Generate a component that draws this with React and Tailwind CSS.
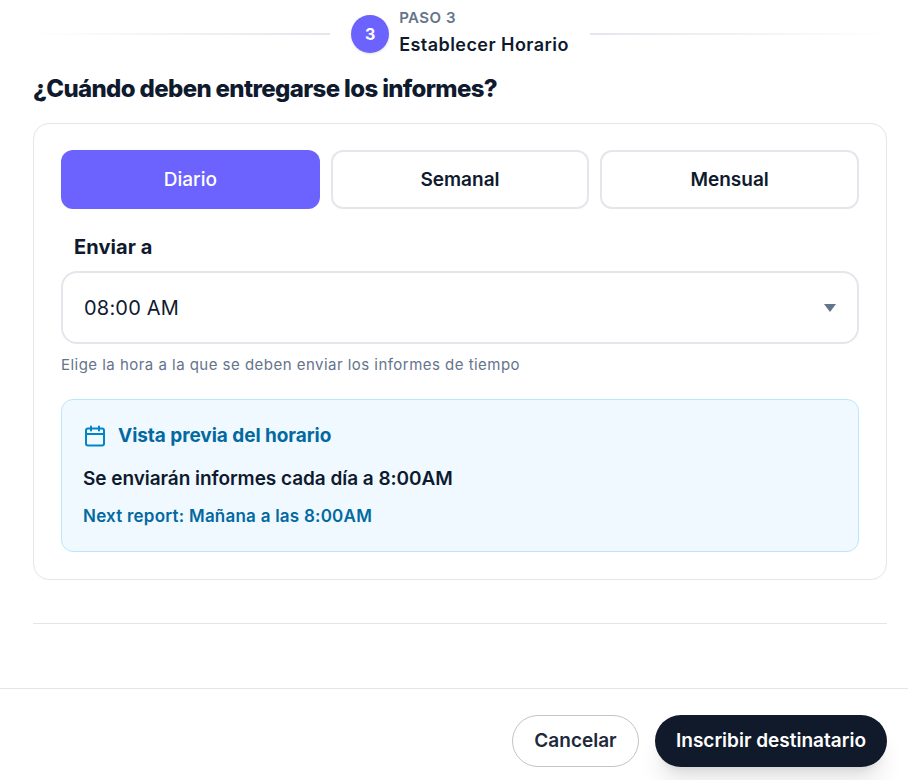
import React from 'react';

const tabs = ['Diario', 'Semanal', 'Mensual'];

function CalendarIcon() {
  return (
    <svg width="24" height="24" viewBox="0 0 24 24" fill="none" stroke="#0284c7" strokeWidth="2" strokeLinecap="round" strokeLinejoin="round">
      <rect x="3" y="4.5" width="18" height="17" rx="2" />
      <path d="M3 10h18M8 2.5v4M16 2.5v4" />
    </svg>
  );
}

export default function App() {
  return (
    <div className="w-[908px] h-[780px] bg-white flex flex-col overflow-hidden font-['Inter',sans-serif] text-[#0f1a2e]">
      {/* Stepper header */}
      <div className="h-[68px] flex items-center pl-[33px] pr-[21px] shrink-0">
        <div className="flex-1 h-0.5 bg-gradient-to-r from-transparent to-[#e5e5ec]" />
        <div className="flex items-center gap-[10px] px-[21px]">
          <div className="w-[38px] h-[38px] rounded-full bg-[#6c63ff] text-white flex items-center justify-center text-[16px] font-bold shadow-sm">3</div>
          <div className="flex flex-col pb-[2px]">
            <span className="text-[15px] leading-[18px] font-semibold tracking-[0.5px] text-[#64748b] mb-[6px]">PASO 3</span>
            <span className="text-[18px] leading-[24px] font-semibold tracking-[0.45px]">Establecer Horario</span>
          </div>
        </div>
        <div className="flex-1 h-0.5 bg-gradient-to-l from-transparent to-[#e5e5ec]" />
      </div>

      <div className="pl-[33px] pr-[21px] flex flex-col flex-1">
        <h2 className="text-[24px] leading-[28px] font-extrabold tracking-[-0.65px] mt-[7px] mb-[20px]">¿Cuándo deben entregarse los informes?</h2>

        {/* Schedule card */}
        <div className="border border-[#e5e5ea] rounded-[16px] px-[27px] pt-[26px] pb-[27px]">
          <div className="grid grid-cols-3 gap-[11px]">
            {tabs.map((t, i) => (
              <button
                key={t}
                className={i === 0
                  ? 'h-[59px] pt-[2px] rounded-[12px] bg-[#6c63ff] text-white text-[19px] font-medium'
                  : 'h-[59px] pt-[2px] rounded-[12px] border-2 border-[#e5e5ec] bg-white text-[19px] font-semibold'}
              >
                {t}
              </button>
            ))}
          </div>

          <label className="block text-[20px] leading-[24px] font-bold tracking-[0.1px] ml-[13px] mt-[26px] mb-[12px]">Enviar a</label>
          <div className="h-[73px] rounded-[16px] border-2 border-[#e5e5ec] flex items-center justify-between pl-[21px] pr-[21px]">
            <span className="text-[20px] tracking-[0.2px]">08:00 AM</span>
            <span className="w-0 h-0 border-l-[6px] border-r-[6px] border-t-[8px] border-l-transparent border-r-transparent border-t-[#64748b]" />
          </div>
          <p className="text-[15px] leading-[20px] tracking-[0.47px] text-[#64748b] mt-[11px] mb-[24px]">Elige la hora a la que se deben enviar los informes de tiempo</p>

          {/* Preview */}
          <div className="h-[153px] rounded-[12px] border border-[#bae6fd] bg-[#f0f9ff] px-[21px] pt-[24px]">
            <div className="flex items-center gap-[11px]">
              <CalendarIcon />
              <span className="text-[19px] leading-[24px] font-bold tracking-[-0.05px] text-[#0369a1]">Vista previa del horario</span>
            </div>
            <p className="text-[19px] leading-[24px] font-semibold tracking-[-0.05px] mt-[19px]">Se enviarán informes cada día a 8:00AM</p>
            <p className="text-[17px] leading-[20px] font-semibold text-[#0369a1] mt-[15px] tracking-[0.23px]">Next report: Mañana a las 8:00AM</p>
          </div>
        </div>

        <div className="h-px bg-[#e5e5e5] mt-[43px]" />
      </div>

      {/* Footer */}
      <div className="h-[92px] shrink-0 border-t border-[#e5e5e5] flex items-start justify-end gap-4 px-[21px] pt-[26px]">
        <button className="w-[127px] h-[52px] rounded-full border border-[#c4c4c8] bg-white text-[19px] font-semibold text-[#1e293b]">Cancelar</button>
        <button className="w-[232px] h-[52px] rounded-full bg-[#101a2a] text-white text-[19px] font-semibold shadow-xl">Inscribir destinatario</button>
      </div>
    </div>
  );
}
